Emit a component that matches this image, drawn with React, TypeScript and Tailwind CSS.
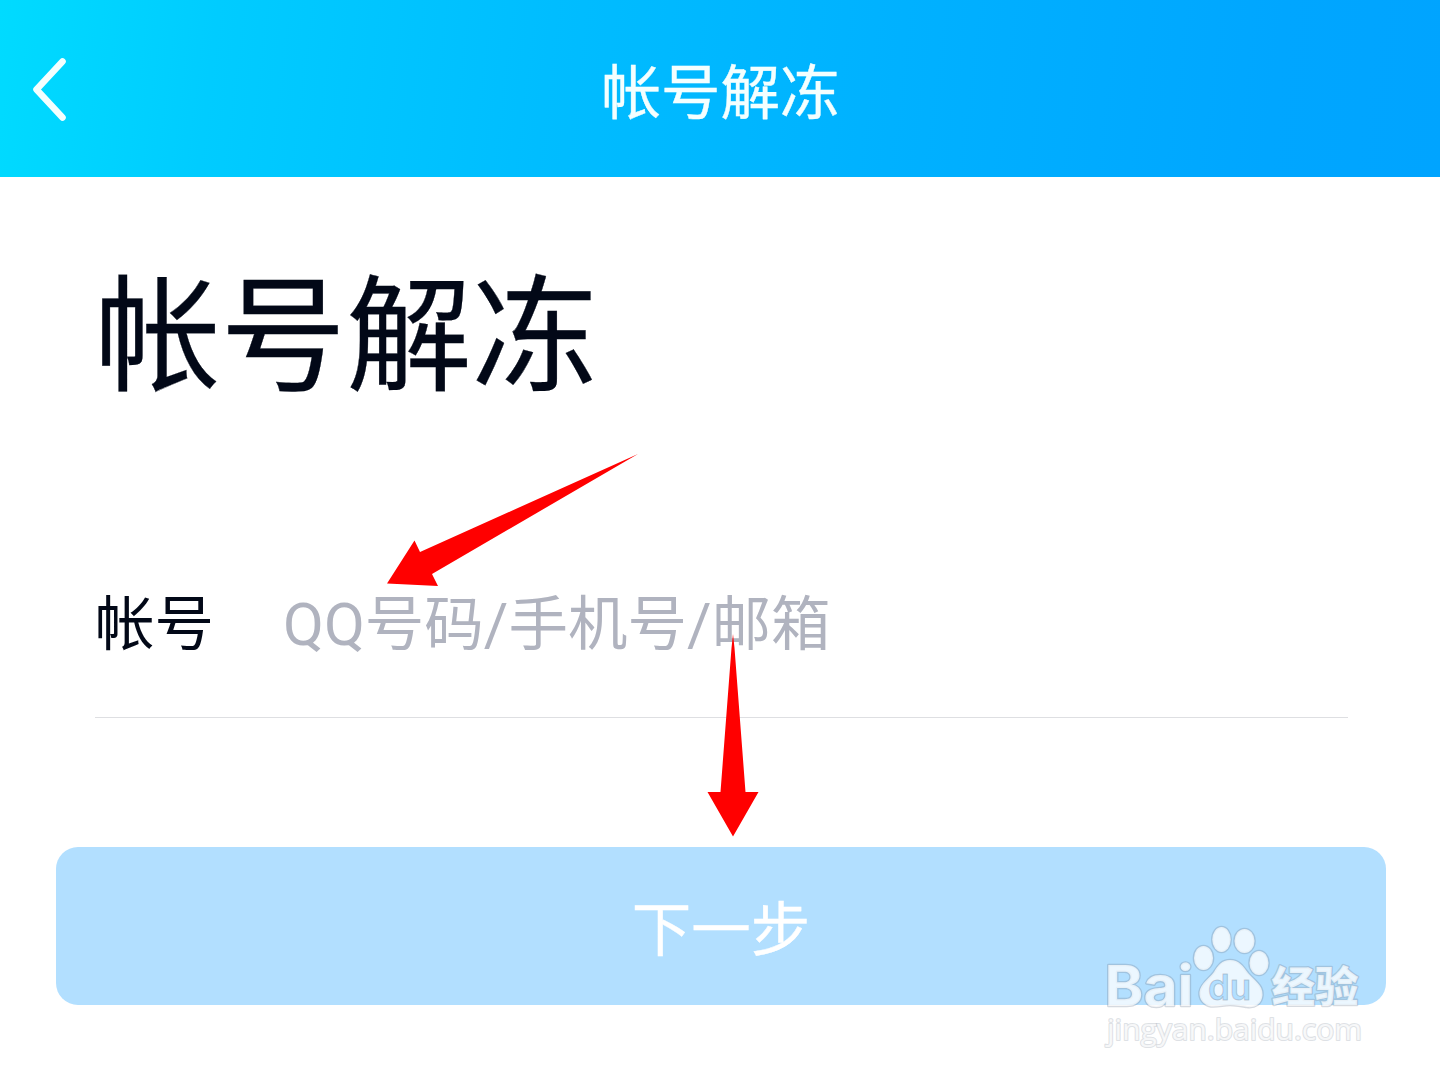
import { useState } from 'react';

const PAGE_FONT = "font-['Noto_Sans_CJK_SC','Noto_Sans',sans-serif]";

function Header({ title }: { title: string }) {
  return (
    <header className="grid h-[177px] grid-cols-[120px_1fr_120px] items-center bg-[linear-gradient(97deg,#00dbff_0%,#00ccff_15%,#00bdff_38%,#00b1ff_62%,#00a6ff_88%,#00a4ff_100%)]">
      <button type="button" aria-label="返回" className="pl-[30px]">
        <svg width="40" height="68" viewBox="0 0 40 68" fill="none">
          <path
            d="M32.5 6.5 L6.5 34.5 L32.5 62.5"
            stroke="#f4ffff"
            strokeWidth="6.6"
            strokeLinecap="round"
            strokeLinejoin="round"
          />
        </svg>
      </button>
      <h1 className="pl-px text-center text-[59.5px] leading-none text-[#f4ffff] [-webkit-text-stroke:0.4px_#f4ffff]">
        {title}
      </h1>
    </header>
  );
}

function Arrows() {
  return (
    <svg className="pointer-events-none absolute inset-0" width="1440" height="1080" viewBox="0 0 1440 1080">
      <g fill="#ff0000">
        <path d="M638 454 L420 552 L414.5 540.5 L387 583.5 L438 586 L432 574 Z" />
        <path d="M733 634 L731.5 648 L720.5 792 L707.5 792 L733 836.5 L758.5 792 L745.5 792 L734.5 648 Z" />
      </g>
    </svg>
  );
}

function Watermark() {
  return (
    <svg
      className="pointer-events-none absolute left-[1090px] top-[910px]"
      width="300"
      height="150"
      viewBox="0 0 300 150"
    >
      <g
        fill="#ffffff"
        fillOpacity="0.75"
        stroke="#7c8a9a"
        strokeOpacity="0.32"
        strokeWidth="2.6"
        strokeLinejoin="round"
        paintOrder="stroke"
      >
        <ellipse cx="113.5" cy="48" rx="9.5" ry="12" />
        <ellipse cx="131.5" cy="29.5" rx="9.2" ry="12.5" />
        <ellipse cx="154.5" cy="31" rx="10" ry="12" />
        <ellipse cx="169" cy="53" rx="9.5" ry="12" />
        <path d="M140 50 C149 50 153 56 158 63 C164 70 173 75 172.5 85 C172 94 165 98 157 97 C151 96 146 95 140 95 C134 95 128 97 121 96.5 C113 95 109 89 109.5 82 C111 73 119 69 124 62 C128 55 132 50 140 50 Z" />
        <text
          x="14.5"
          y="95.5"
          fontSize="56"
          fontWeight="700"
          fontFamily="Inter, sans-serif"
          textLength="89"
          lengthAdjust="spacingAndGlyphs"
        >
          Bai
        </text>
        <text
          x="181.5"
          y="91.5"
          fontSize="42"
          fontWeight="900"
          fontFamily="'Noto Sans CJK SC', sans-serif"
          textLength="87"
          lengthAdjust="spacingAndGlyphs"
        >
          经验
        </text>
        <text
          x="17"
          y="130"
          fontSize="30"
          fontWeight="500"
          fontFamily="'Open Sans', sans-serif"
          strokeOpacity="0.25"
          strokeWidth="2.2"
          textLength="255"
          lengthAdjust="spacingAndGlyphs"
        >
          jingyan.baidu.com
        </text>
      </g>
      <text
        x="118"
        y="90"
        fontSize="36"
        fontWeight="600"
        fontFamily="Inter, sans-serif"
        fill="#b2dfff"
        stroke="#7c8a9a"
        strokeOpacity="0.4"
        textLength="43"
        lengthAdjust="spacingAndGlyphs"
      >
        du
      </text>
    </svg>
  );
}

export default function App() {
  const [account, setAccount] = useState('');

  return (
    <div className={`relative h-[1080px] w-[1440px] overflow-hidden bg-white ${PAGE_FONT}`}>
      <Header title="帐号解冻" />

      <main className="flex flex-col">
        <h2 className="mt-[86px] pl-[95px] text-[125.6px] leading-[126px] text-[#020817] [-webkit-text-stroke:0.3px_#020817]">
          帐号解冻
        </h2>

        <label className="ml-[95px] mr-[92px] mt-[141px] flex h-[188px] items-center border-b border-[#dedfe2] pb-[7px] text-[59.5px] text-[#020817]">
          <span className="w-[188px] leading-none">帐号</span>
          <input
            value={account}
            onChange={(e) => setAccount(e.target.value)}
            placeholder="QQ号码/手机号/邮箱"
            className="h-[90px] flex-1 pt-2.5 font-[Roboto,'Noto_Sans_CJK_SC',sans-serif] outline-none placeholder:text-[#b0b3bf]"
          />
        </label>

        <button
          type="button"
          className="ml-14 mr-[54px] mt-[129px] h-[158px] rounded-[22px] bg-[#b2dfff] text-[59.5px] leading-none text-white [-webkit-text-stroke:0.4px_#ffffff]"
        >
          下一步
        </button>
      </main>

      <Arrows />
      <Watermark />
    </div>
  );
}
